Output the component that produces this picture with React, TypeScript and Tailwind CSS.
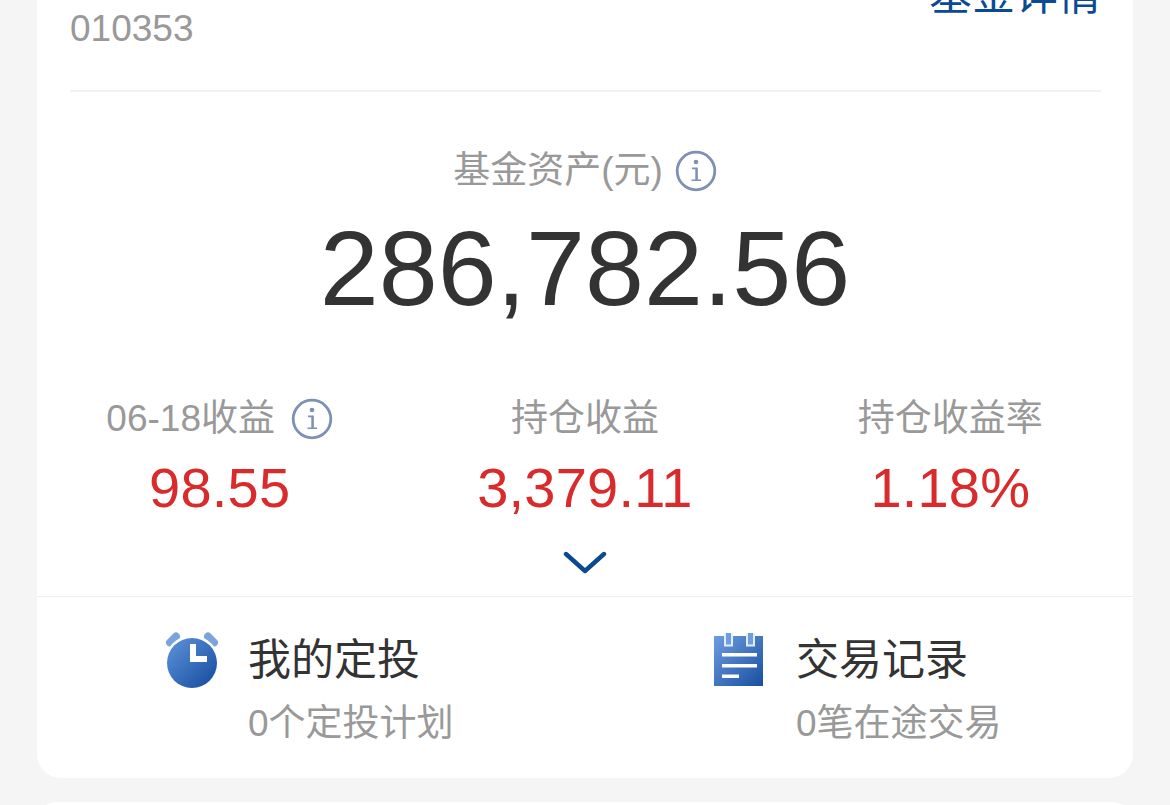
const font = { fontFamily: '"Liberation Sans", "Noto Sans CJK SC", sans-serif' };

function InfoIcon() {
  return (
    <svg width="42" height="42" viewBox="0 0 42 42" fill="none" className="shrink-0">
      <circle cx="21" cy="21" r="18.8" stroke="#7f90b5" strokeWidth="2.8" />
      <circle cx="21" cy="12" r="2.3" fill="#7f90b5" />
      <path d="M17 18.4H22V30M16.5 30.3H26" stroke="#7f90b5" strokeWidth="1.6" />
      <path d="M21.3 18.5V30" stroke="#7f90b5" strokeWidth="2" />
    </svg>
  );
}

function ClockIcon() {
  return (
    <svg width="54" height="58" viewBox="0 0 54 58" className="shrink-0">
      <defs>
        <linearGradient id="clockFill" x1="0" y1="0" x2="1" y2="1">
          <stop offset="0" stopColor="#5f94dc" />
          <stop offset="1" stopColor="#144a9c" />
        </linearGradient>
      </defs>
      <path d="M5 11.5 11 5.5" stroke="#7ba4dd" strokeWidth="8" strokeLinecap="round" />
      <path d="M49 11.5 43 5.5" stroke="#7ba4dd" strokeWidth="8" strokeLinecap="round" />
      <circle cx="27" cy="32" r="27.5" fill="#fff" />
      <circle cx="27" cy="32" r="25" fill="url(#clockFill)" />
      <path d="M28 13V28H42" fill="none" stroke="#fff" strokeWidth="6" />
    </svg>
  );
}

function NoteIcon() {
  return (
    <svg width="52" height="56" viewBox="0 0 52 56" className="shrink-0">
      <defs>
        <linearGradient id="noteFill" x1="0" y1="0" x2="1" y2="1">
          <stop offset="0" stopColor="#6e9de0" />
          <stop offset="1" stopColor="#174f9f" />
        </linearGradient>
      </defs>
      <rect x="1" y="4" width="49" height="50" fill="url(#noteFill)" />
      <path d="M12 1v12.5h7V1M34 1v12.5h7V1" fill="#6e9de0" stroke="#e3ecf9" strokeWidth="2" />
      <rect x="9" y="21" width="35" height="3.5" fill="#fff" />
      <rect x="9" y="32" width="35" height="3.5" fill="#fff" />
      <rect x="9" y="42.5" width="17" height="3.5" fill="#fff" />
    </svg>
  );
}

function Stat({ label, value, info }: { label: string; value: string; info?: boolean }) {
  return (
    <div className="flex flex-col items-center">
      <div className="flex h-[44px] items-center gap-[16px] text-[37px] leading-[44px] text-[#999999]">
        <span>{label}</span>
        {info && <InfoIcon />}
      </div>
      <div className="mt-[17px] text-[56px] leading-[60px] tracking-[0.2px] text-[#d92b2b]">{value}</div>
    </div>
  );
}

function Entry({ icon, title, sub }: { icon: React.ReactNode; title: string; sub: string }) {
  return (
    <div className="flex items-start pl-[128px]">
      <div className="flex h-[50px] w-[83px] items-center">{icon}</div>
      <div className="flex flex-col">
        <div className="text-[43px] leading-[50px] text-[#333333]">{title}</div>
        <div className="mt-[17px] text-[37px] leading-[44px] whitespace-nowrap text-[#999999]">{sub}</div>
      </div>
    </div>
  );
}

export default function App() {
  return (
    <div className="h-[805px] w-[1170px] overflow-hidden bg-[#f5f5f5] px-[37px]" style={font}>
      <div className="-mt-[40px] rounded-[24px] bg-white">
        <div className="mr-[32px] ml-[33px] flex h-[132px] items-start justify-between border-b-2 border-[#f2f2f2]">
          <div className="mt-[47px] text-[37px] leading-[44px] text-[#999999]">010353</div>
          <div className="mt-[10px] text-[43px] leading-[50px] text-[#0b4a93]">基金详情</div>
        </div>

        <div className="mt-[57px] flex h-[44px] items-center justify-center gap-[12px] text-[37px] leading-[44px] text-[#999999]">
          <span>基金资产(元)</span>
          <InfoIcon />
        </div>
        <div className="mt-[20px] text-center text-[106px] leading-[110px] text-[#333333]">286,782.56</div>

        <div className="mt-[74px] grid grid-cols-3">
          <Stat label="06-18收益" value="98.55" info />
          <Stat label="持仓收益" value="3,379.11" />
          <Stat label="持仓收益率" value="1.18%" />
        </div>

        <div className="mt-[33px] mb-[21px] flex justify-center">
          <svg width="44" height="24" viewBox="0 0 44 24" fill="none">
            <path d="M3 3 22 20 41 3" stroke="#0b4a93" strokeWidth="4.4" strokeLinecap="round" strokeLinejoin="round" />
          </svg>
        </div>

        <div className="grid grid-cols-2 border-t border-[#eeeeee] pt-[38px] pb-[32px]">
          <Entry icon={<ClockIcon />} title="我的定投" sub="0个定投计划" />
          <Entry icon={<NoteIcon />} title="交易记录" sub="0笔在途交易" />
        </div>
      </div>
      <div className="mt-[24px] h-[40px] rounded-[24px] bg-white" />
    </div>
  );
}
